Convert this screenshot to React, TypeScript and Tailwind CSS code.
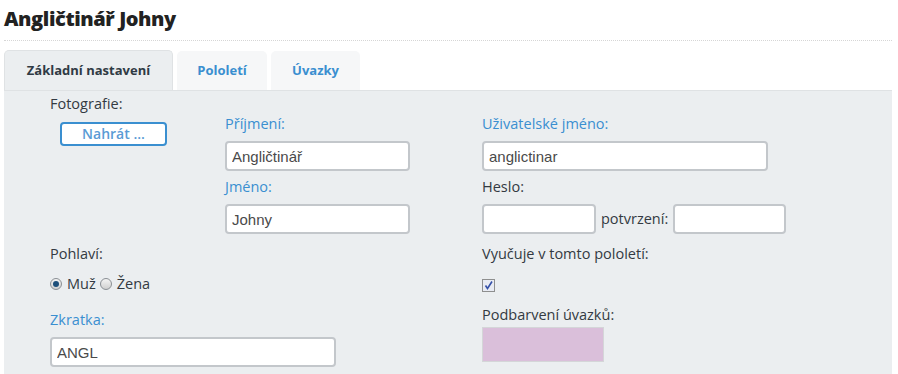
import React from 'react';

const label = 'block h-5 text-[14.5px] leading-5 text-[#333a42]';
const blueLabel = 'block h-5 text-[14.5px] leading-5 text-[#3a8fd0]';
const input =
  "block h-[30px] rounded-[4px] border-2 border-[#c3c7cb] bg-white px-[5px] text-[15px] text-[#4a4a4a] outline-none font-['Liberation_Sans',Arial,sans-serif]";

function Radio({ checked }: { checked?: boolean }) {
  return (
    <span className="inline-flex h-[12px] w-[12px] items-center justify-center rounded-full border border-[#8a8f94] bg-gradient-to-b from-[#f4f4f4] to-[#d0d0d0]">
      {checked && <span className="h-[6px] w-[6px] rounded-full bg-[#1d4f7a]" />}
    </span>
  );
}

export default function App() {
  return (
    <div className="h-[374px] w-[898px] overflow-hidden bg-white pl-[4px] pr-[6px] font-['Open_Sans',sans-serif]">
      <h1 className="h-[40px] pt-[5px] text-[20px] font-extrabold leading-[28px] tracking-[-0.4px] text-[#222]">
        Angličtinář Johny
      </h1>
      <div className="border-t border-dotted border-[#d6d6d6]" />

      <div className="mt-[9px] flex items-end gap-[4px]">
        <div className="flex h-[40px] w-[169px] items-center justify-center rounded-t-[5px] border border-b-0 border-[#dfe2e4] bg-[#ebeef0] text-[13px] font-bold text-[#2f3a44]">
          Základní nastavení
        </div>
        <div className="flex h-[39px] w-[90px] items-center justify-center rounded-t-[5px] bg-[#f6f7f8] text-[13px] font-bold text-[#3a8fd0]">
          Pololetí
        </div>
        <div className="flex h-[39px] w-[89px] items-center justify-center rounded-t-[5px] bg-[#f6f7f8] text-[13px] font-bold text-[#3a8fd0]">
          Úvazky
        </div>
      </div>

      <div className="h-[300px] border-t border-[#dfe2e4] bg-[#ebeef0] pl-[46px] pt-[3px]">
        <div className="flex">
          <div className="w-[175px]">
            <span className={label}>Fotografie:</span>
            <button className="ml-[10px] mt-[8px] h-[24px] w-[107px] rounded-[4px] border-2 border-[#3a8fd0] bg-white text-[14px] font-semibold leading-[18px] text-[#5a9bd5]">
              Nahrát ...
            </button>
          </div>
          <div className="w-[257px] pt-[20px]">
            <span className={blueLabel}>Příjmení:</span>
            <input className={`${input} mt-[7px] w-[185px]`} defaultValue="Angličtinář" />
            <span className={`${blueLabel} mt-[6px]`}>Jméno:</span>
            <input className={`${input} mt-[7px] w-[185px]`} defaultValue="Johny" />
          </div>
          <div className="pt-[20px]">
            <span className={blueLabel}>Uživatelské jméno:</span>
            <input className={`${input} mt-[7px] w-[286px]`} defaultValue="anglictinar" />
            <span className={`${label} mt-[6px]`}>Heslo:</span>
            <div className="mt-[7px] flex items-center">
              <input className={`${input} w-[114px]`} />
              <span className="ml-[5px] mr-[5px] text-[14.5px] text-[#333a42]">potvrzení:</span>
              <input className={`${input} w-[113px]`} />
            </div>
          </div>
        </div>

        <div className="mt-[10px] flex">
          <div className="w-[432px]">
            <span className={label}>Pohlaví:</span>
            <div className="mt-[10px] flex h-5 items-center text-[14.5px] text-[#333a42]">
              <Radio checked />
              <span className="ml-[5px] mr-[4px]">Muž</span>
              <Radio />
              <span className="ml-[5px]">Žena</span>
            </div>
            <span className={`${blueLabel} mt-[16px]`}>Zkratka:</span>
            <input className={`${input} mt-[7px] w-[286px]`} defaultValue="ANGL" />
          </div>
          <div>
            <span className={label}>Vyučuje v tomto pololetí:</span>
            <div className="mt-[15px] flex h-[13px] w-[13px] items-center justify-center border border-[#8e8f8f] bg-[#e8ebf3]">
              <svg width="9" height="9" viewBox="0 0 9 9">
                <path d="M1.5 4.5 L3.5 7.5 L8 0.5" fill="none" stroke="#3550a8" strokeWidth="1.6" />
              </svg>
            </div>
            <span className={`${label} mt-[13px]`}>Podbarvení úvazků:</span>
            <div className="mt-[2px] h-[35px] w-[122px] border border-[#d4d6d8] bg-[#dabfda]" />
          </div>
        </div>
      </div>
    </div>
  );
}
